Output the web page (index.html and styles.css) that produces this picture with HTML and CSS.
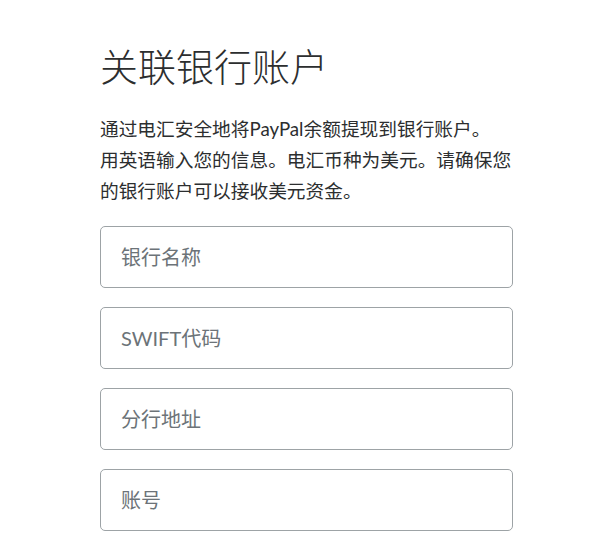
FILE: index.html
```html
<!DOCTYPE html>
<html lang="zh-CN">
<head>
    <meta charset="UTF-8">
    <title>关联银行账户</title>
    <link rel="stylesheet" href="styles.css">
</head>
<body>

<div class="main">
    <h1 class="title">关联银行账户</h1>
    <p class="intro">通过电汇安全地将PayPal余额提现到银行账户。<br>用英语输入您的信息。电汇币种为美元。请确保您<br>的银行账户可以接收美元资金。</p>

    <div class="field">
        <input id="bankName" placeholder="银行名称">
    </div>
    <div class="field">
        <input id="swift" placeholder="SWIFT代码">
    </div>
    <div class="field">
        <input id="branch" placeholder="分行地址">
    </div>
    <div class="field">
        <input id="account" placeholder="账号">
    </div>
</div>

</body>
</html>
```

FILE: styles.css
```css
*{
    margin: 0;
    padding: 0;
    box-sizing: border-box;
}
body,html {
    height: 100%;
    background-color: #ffffff;
}
body{
    font-family: Lato, "Noto Sans CJK SC", sans-serif;
    color: #333333;
}
.main{
    width: 413px;
    margin-left: 100px;
    padding-top: 38px;
}
.title{
    font-size: 38px;
    font-weight: 300;
    line-height: 56px;
    color: #2c2e2f;
}
.intro{
    margin-top: 20px;
    font-size: 18.7px;
    line-height: 31px;
    color: #2c2e2f;
    white-space: nowrap;
}
.field{
    margin-top: 19px;
}
.field:first-of-type{
    margin-top: 19px;
}
input{
    display: block;
    width: 100%;
    height: 62px;
    border: 1px solid #9da3a6;
    border-radius: 5px;
    padding: 0 20px;
    font-family: Lato, "Noto Sans CJK SC", sans-serif;
    font-size: 20px;
    color: #2c2e2f;
    outline: none;
}
input::placeholder{
    color: #6c7378;
}
```
